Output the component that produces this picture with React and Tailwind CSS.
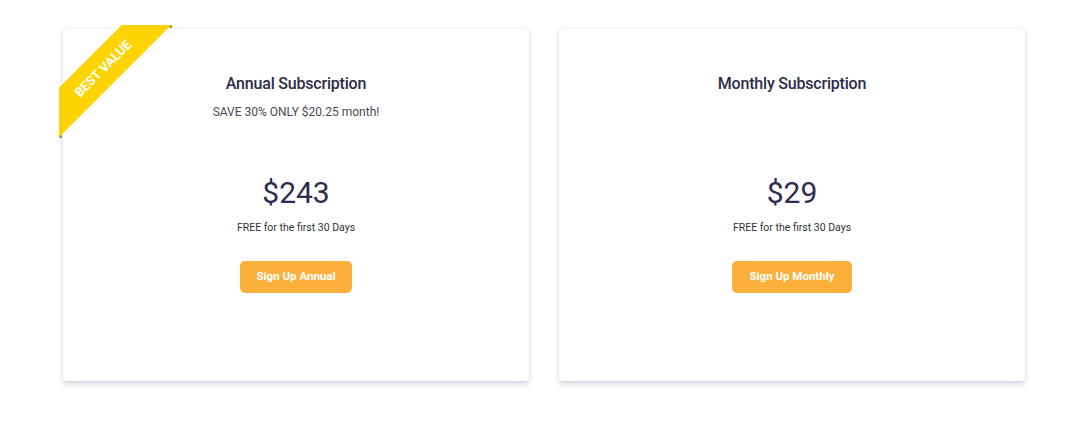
import React from 'react';

const plans = [
  {
    title: 'Annual Subscription',
    note: 'SAVE 30% ONLY $20.25 month!',
    price: '$243',
    cta: 'Sign Up Annual',
    ribbon: true,
  },
  {
    title: 'Monthly Subscription',
    note: '',
    price: '$29',
    cta: 'Sign Up Monthly',
    ribbon: false,
  },
];

const Ribbon = () => (
  <div className="absolute -top-1 -left-1 w-[113px] h-[113px] overflow-hidden z-10">
    {/* little folds at the ends */}
    <span className="absolute top-0 right-0 w-[3px] h-[3px] bg-[#a59a5a]" />
    <span className="absolute bottom-0 left-0 w-[3px] h-[3px] bg-[#a59a5a]" />
    <span className="absolute left-[-36px] top-[26px] w-[160px] h-[35px] -rotate-45 bg-[#fdd400] text-white text-[13px] font-bold flex items-center justify-center">
      BEST VALUE
    </span>
  </div>
);

const PlanCard = ({ plan }) => (
  <div className="relative w-[466px] h-[352px] bg-white rounded-[3px] shadow-[0_3px_6px_rgba(120,140,170,0.35),0_0_3px_rgba(0,0,0,0.06)] flex flex-col items-center">
    {plan.ribbon && <Ribbon />}
    <h2 className="mt-[45px] text-[16px] leading-5 font-medium text-[#2e2c47] tracking-[-0.2px]">
      {plan.title}
    </h2>
    <p className="mt-[10px] h-[16px] text-[12px] leading-4 text-[#4a4a55]">{plan.note}</p>
    <div className="mt-[55px] text-[30px] leading-9 text-[#2e2c4f]">{plan.price}</div>
    <p className="mt-[11px] text-[10.5px] leading-3 text-[#333]">FREE for the first 30 Days</p>
    <button className="mt-[27px] h-[32px] px-[17px] rounded-[5px] bg-[#fbb03b] text-white text-[11.5px] font-bold">
      {plan.cta}
    </button>
  </div>
);

export default function App() {
  return (
    <div className="w-[1078px] h-[433px] bg-white pt-[29px] pl-[63px] flex gap-[30px] font-['Roboto',sans-serif]">
      {plans.map((p) => (
        <PlanCard key={p.title} plan={p} />
      ))}
    </div>
  );
}
